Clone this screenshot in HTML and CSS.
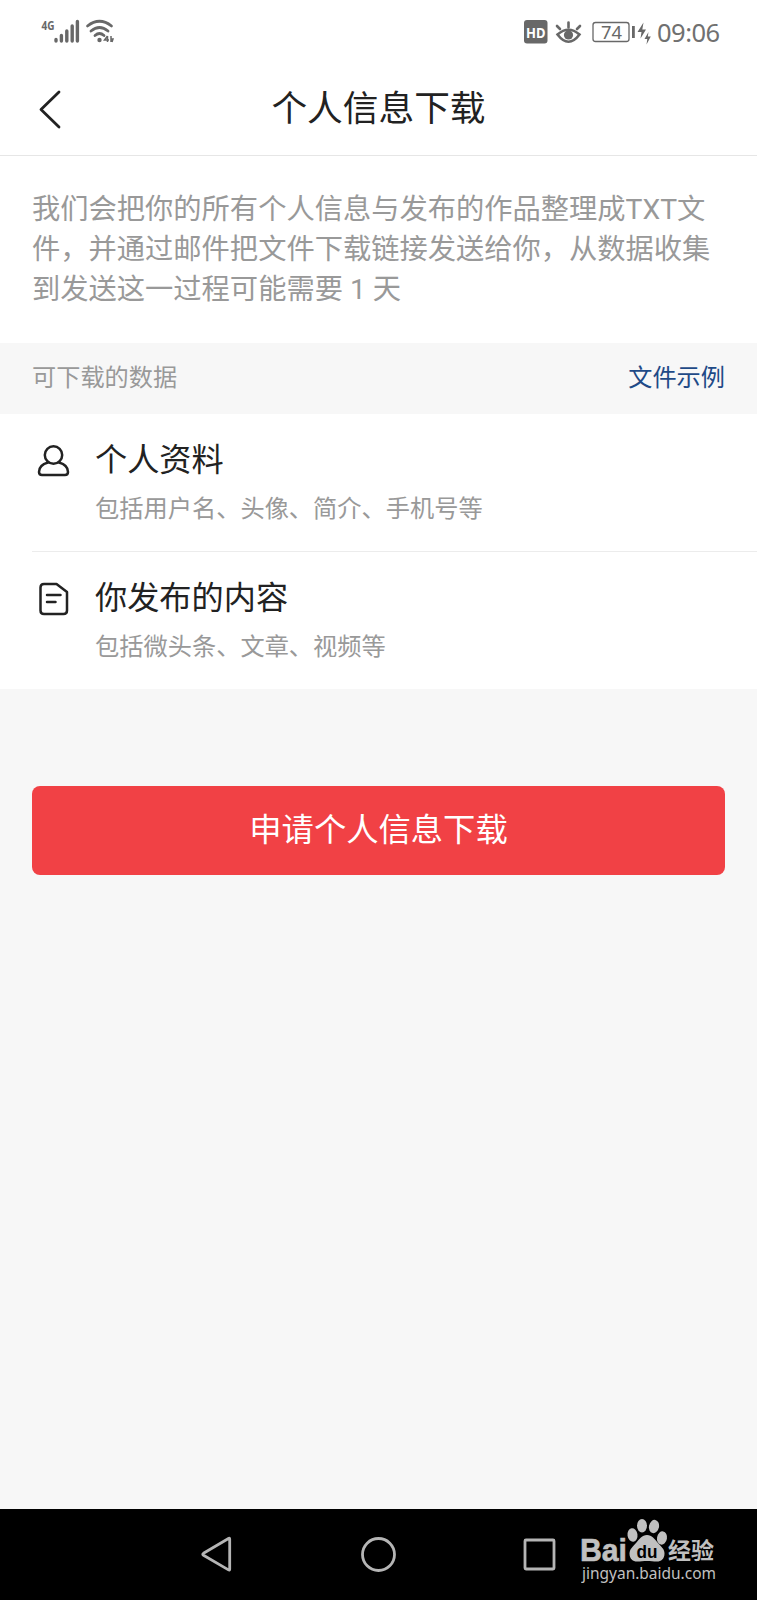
FILE: index.html
```html
<!DOCTYPE html>
<html lang="zh-CN">
<head>
<meta charset="utf-8">
<title>个人信息下载</title>
<link rel="stylesheet" href="styles.css">
</head>
<body>
<div class="screen">
  <div class="status">
    <svg class="status-left" width="90" height="40" viewBox="0 0 90 40">
      <text class="net" x="1.500" y="15.500" textLength="13" lengthAdjust="spacingAndGlyphs">4G</text>
      <g class="bars">
        <path d="M16 25.500v1.500M21.400 21.500v5.500M26.800 17v10M32.200 12v15M37.400 7.500v19.500"/>
      </g>
      <g class="waves">
        <path d="M47.500 12Q59.500 2.500 71.500 12"/>
        <path d="M51 17Q59.500 10 68 17"/>
        <path d="M55 21.500Q59.500 17.500 64 21.500"/>
      </g>
      <circle class="solid" cx="59.500" cy="26" r="2.200"/>
      <path class="tiny" d="M67.500 22l-3 4h4.500M67.500 22v6M71 22v6M71 25h2l-1 3"/>
    </svg>
    <div class="status-right">
      <svg class="status-icons" width="136" height="40" viewBox="0 0 136 40">
        <rect class="solid" x="0" y="6" width="23.500" height="23.500" rx="3"/>
        <text class="hd" x="2" y="23.500" textLength="19.500" lengthAdjust="spacingAndGlyphs">HD</text>
        <path class="eye" d="M33.500 20.500Q44.500 11 55.500 20.500Q44.500 35 33.500 20.500Z"/>
        <circle class="solid" cx="44.500" cy="21" r="4.600"/>
        <path class="eye" d="M44.500 13.500V8.500M36 15l-3-3M53 15l3-3"/>
        <rect class="cell" x="69" y="8.500" width="36" height="19" rx="2.500"/>
        <text class="pct" x="77" y="24.500" textLength="21" lengthAdjust="spacingAndGlyphs">74</text>
        <path class="solid" d="M108 12h2.800v12H108zM119.500 8.500l-6 9.500h4l-1 6.500 5.500-9h-3.700zM124.500 18l-4 7h2.800l-.8 5.500 4.300-8h-3z"/>
      </svg>
      <span class="clock">09:06</span>
    </div>
  </div>
  <header class="header">
    <svg class="back" width="24" height="42" viewBox="0 0 24 42"><path d="M21 3L3 20.500l18 17.500"/></svg>
    <h1 class="title">个人信息下载</h1>
  </header>
  <p class="intro">我们会把你的所有个人信息与发布的作品整理成TXT文<br>件，并通过邮件把文件下载链接发送给你，从数据收集<br>到发送这一过程可能需要 1 天</p>
  <div class="band"><span>可下载的数据</span><a class="sample">文件示例</a></div>
  <div class="list">
    <div class="row">
      <svg class="row-icon" width="34" height="34" viewBox="0 0 34 34">
        <circle cx="17.500" cy="11" r="8.700"/>
        <path d="M12 18.500C6.500 20 3 23.500 3 28c0 2 1 3 3 3h23c2 0 3-1 3-3 0-4.500-3.500-8-9-9.500"/>
      </svg>
      <div class="row-text"><div class="name">个人资料</div><div class="desc">包括用户名、头像、简介、手机号等</div></div>
    </div>
    <div class="row second">
      <svg class="row-icon" width="34" height="34" viewBox="0 0 34 34">
        <path d="M8 2H20.500L31 10V28.500q0 3.500-3.500 3.500H8Q4.500 32 4.500 28.500V5.500Q4.500 2 8 2ZM11 13h13.500M11 20h8.500"/>
      </svg>
      <div class="row-text"><div class="name">你发布的内容</div><div class="desc">包括微头条、文章、视频等</div></div>
    </div>
  </div>
  <button class="apply">申请个人信息下载</button>
  <nav class="nav">
    <svg class="keys" width="360" height="40" viewBox="0 0 360 40">
      <path d="M28.500 4.500q1.200-.7 1.200.7v30q0 1.400-1.200.7L3.500 21.300q-1.500-1 0-2z"/>
      <circle cx="178.500" cy="20.500" r="16"/>
      <rect x="325" y="6" width="29" height="29" rx="1"/>
    </svg>
    <svg class="brand" width="140" height="66" viewBox="0 0 140 66">
      <text class="bai" x="-1" y="42.500" textLength="47" lengthAdjust="spacingAndGlyphs">Bai</text>
      <ellipse cx="51.500" cy="17" rx="5" ry="6.700" transform="rotate(-8 51.500 17)"/>
      <ellipse cx="61" cy="7.700" rx="5" ry="6.700"/>
      <ellipse cx="73" cy="8.500" rx="5" ry="6.700" transform="rotate(12 73 8.500)"/>
      <ellipse cx="81" cy="20" rx="5" ry="6.700" transform="rotate(10 81 20)"/>
      <path d="M66 17c5 0 7.500 4 11 8 3 3.500 6.500 6 6.500 10.500 0 5.500-3.500 8-7.500 8-4 0-6-.5-10-.5s-6 .5-10 .5c-4 0-7.500-2.500-7.500-8 0-4.500 3.500-7 6.500-10.500 3.500-4 6-8 11-8z"/>
      <text class="du" x="55.500" y="39.500" textLength="21" lengthAdjust="spacingAndGlyphs">du</text>
      <text class="exp" x="87" y="41" textLength="46" lengthAdjust="spacingAndGlyphs">经验</text>
      <text class="site" x="1" y="60.500" textLength="134" lengthAdjust="spacingAndGlyphs">jingyan.baidu.com</text>
    </svg>
  </nav>
</div>
</body>
</html>
```

FILE: styles.css
```css
* { box-sizing: border-box; }
body { margin: 0; font-family: "Noto Sans CJK SC", sans-serif; background: #f7f7f7; }
.screen { width: 757px; height: 1600px; display: flex; flex-direction: column; overflow: hidden; }
svg { display: block; flex: none; }

.status { height: 64px; padding: 14px 36px 0 40px; display: flex; justify-content: space-between; align-items: flex-start; background: #fff; }
.status-right { display: flex; }
.clock { width: 64px; margin-left: -3px; font: 25.500px/36px "Noto Sans", sans-serif; letter-spacing: -.5px; color: #707070; white-space: nowrap; }
.solid { fill: #686868; }
.net { font: bold 12px "Noto Sans", sans-serif; fill: #686868; }
.bars { stroke: #686868; stroke-width: 3.400; stroke-linecap: round; }
.waves { fill: none; stroke: #686868; stroke-width: 2.800; stroke-linecap: round; }
.tiny { fill: none; stroke: #686868; stroke-width: 1.500; }
.hd { font: bold 15px "Noto Sans", sans-serif; fill: #fff; }
.eye { fill: none; stroke: #686868; stroke-width: 2.600; stroke-linecap: round; }
.cell { fill: none; stroke: #686868; stroke-width: 1.300; }
.pct { font: 18px "Noto Sans", sans-serif; fill: #686868; }

.header { height: 92px; padding: 0 38px 3px; display: grid; grid-template-columns: 24px 1fr 24px; align-items: center; background: #fff; border-bottom: 1px solid #e6e6e6; }
.back { margin-top: 3px; fill: none; stroke: #222; stroke-width: 2.800; stroke-linecap: round; stroke-linejoin: round; }
.title { margin: -4px 0 0; text-align: center; font-size: 35.700px; font-weight: 400; line-height: 52px; color: #222; }

.intro { margin: 0; height: 187px; padding: 34px 32px 0; font-family: Roboto, "Noto Sans CJK SC", sans-serif; font-size: 28.280px; line-height: 40px; color: #999; background: #fff; white-space: nowrap; }
.band { height: 71px; padding: 0 32px 6px; display: flex; justify-content: space-between; align-items: center; font-size: 24.200px; color: #999; }
.sample { color: #1f4a87; }

.list { background: #fff; padding-left: 32px; }
.row { height: 137px; padding: 21px 0 0 4px; display: flex; gap: 25px; }
.second { border-top: 1px solid #ececec; height: 138px; }
.row-icon { margin-top: 9px; fill: none; stroke: #222; stroke-width: 2.500; stroke-linecap: round; stroke-linejoin: round; }
.name { margin-top: -1px; font-size: 32.200px; line-height: 46px; color: #222; }
.desc { margin-top: 9px; font-size: 24.240px; line-height: 36px; color: #999; }

.apply { margin: 97px 32px 0; height: 89px; padding: 0 0 7px; border: 0; border-radius: 8px; background: #f14145; color: #fff; font: 32.300px/46px "Noto Sans CJK SC", sans-serif; }

.nav { margin-top: auto; height: 91px; padding-left: 200px; display: flex; background: #000; }
.keys { margin-top: 25px; fill: none; stroke: #b5b5b5; stroke-width: 2.800; }
.brand { margin: 9px 0 0 21px; fill: #c0c0c0; }
.bai { font: bold 32px "Liberation Sans", sans-serif; stroke: #c0c0c0; stroke-width: .6; }
.du { font: bold 19px "Liberation Sans", sans-serif; fill: #000; }
.exp { font: bold 23px "Noto Sans CJK SC", sans-serif; }
.site { font: 16px "Noto Sans", sans-serif; }
```
